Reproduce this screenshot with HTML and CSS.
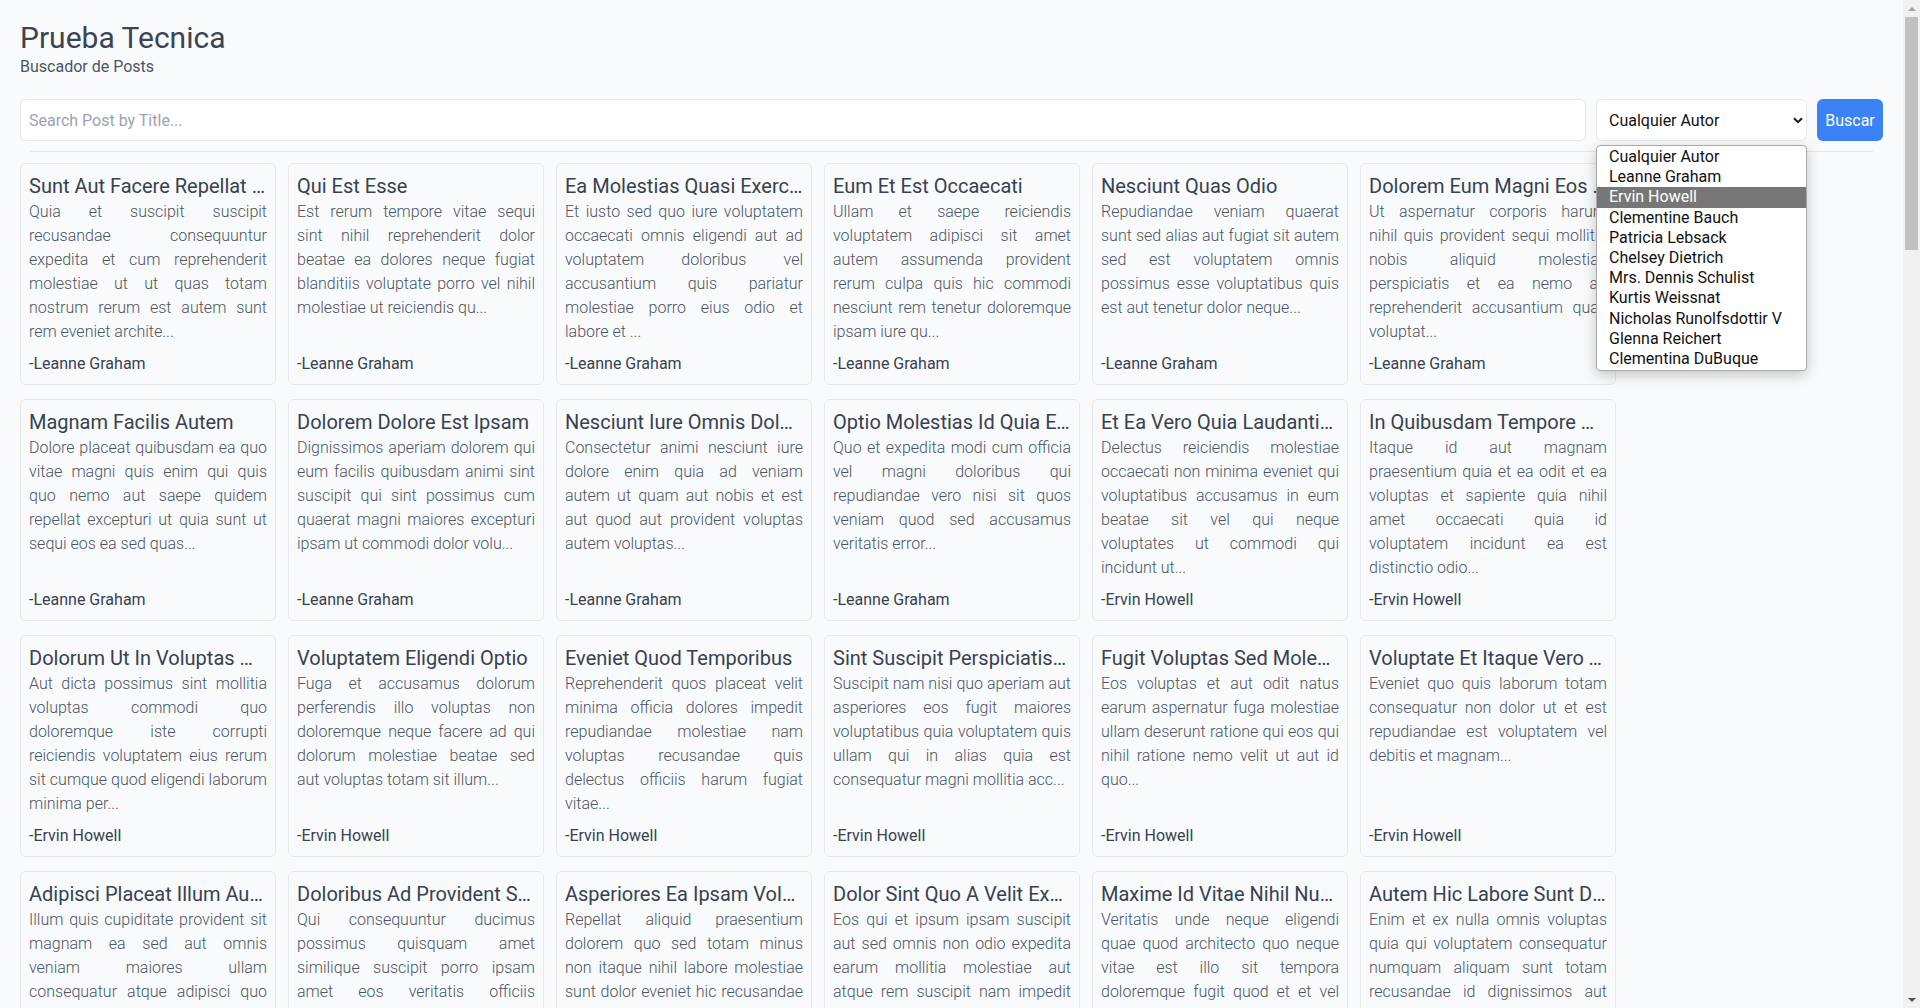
FILE: index.html
```html
<!DOCTYPE html>
<html lang="es">
<head>
<meta charset="utf-8">
<title>Prueba Tecnica</title>
<link rel="stylesheet" href="styles.css">
</head>
<body>
<div class="screen">
  <main class="page">
    <header class="header">
      <h1 class="title">Prueba Tecnica</h1>
      <p class="subtitle">Buscador de Posts</p>
    </header>

    <form class="search">
      <input class="search-input" type="text" placeholder="Search Post by Title...">
      <div class="select">
        <div class="select-box">
          <span>Cualquier Autor</span>
          <svg class="chevron" width="10" height="7" viewBox="0 0 10 7"><path d="M1 1.2 L5 5.2 L9 1.2" fill="none" stroke="#1a1a1a" stroke-width="2"/></svg>
        </div>
        <ul class="select-menu">
          <li>Cualquier Autor</li>
          <li>Leanne Graham</li>
          <li class="active">Ervin Howell</li>
          <li>Clementine Bauch</li>
          <li>Patricia Lebsack</li>
          <li>Chelsey Dietrich</li>
          <li>Mrs. Dennis Schulist</li>
          <li>Kurtis Weissnat</li>
          <li>Nicholas Runolfsdottir V</li>
          <li>Glenna Reichert</li>
          <li>Clementina DuBuque</li>
        </ul>
      </div>
      <button class="btn" type="button">Buscar</button>
    </form>

    <hr class="divider">

    <section class="grid">
      <article class="card"><h2 class="card-title">sunt aut facere repellat provident occaecati excepturi optio reprehenderit</h2><p class="card-body">Quia et suscipit suscipit recusandae consequuntur expedita et cum reprehenderit molestiae ut ut quas totam nostrum rerum est autem sunt rem eveniet archite...</p><p class="card-author">-Leanne Graham</p></article>
      <article class="card"><h2 class="card-title">qui est esse</h2><p class="card-body">Est rerum tempore vitae sequi sint nihil reprehenderit dolor beatae ea dolores neque fugiat blanditiis voluptate porro vel nihil molestiae ut reiciendis qu...</p><p class="card-author">-Leanne Graham</p></article>
      <article class="card"><h2 class="card-title">ea molestias quasi exercitationem repellat qui ipsa sit aut</h2><p class="card-body">Et iusto sed quo iure voluptatem occaecati omnis eligendi aut ad voluptatem doloribus vel accusantium quis pariatur molestiae porro eius odio et labore et ...</p><p class="card-author">-Leanne Graham</p></article>
      <article class="card"><h2 class="card-title">eum et est occaecati</h2><p class="card-body">Ullam et saepe reiciendis voluptatem adipisci sit amet autem assumenda provident rerum culpa quis hic commodi nesciunt rem tenetur doloremque ipsam iure qu...</p><p class="card-author">-Leanne Graham</p></article>
      <article class="card"><h2 class="card-title">nesciunt quas odio</h2><p class="card-body">Repudiandae veniam quaerat sunt sed alias aut fugiat sit autem sed est voluptatem omnis possimus esse voluptatibus quis est aut tenetur dolor neque...</p><p class="card-author">-Leanne Graham</p></article>
      <article class="card"><h2 class="card-title">dolorem eum magni eos aperiam quia</h2><p class="card-body">Ut aspernatur corporis harum nihil quis provident sequi mollitia nobis aliquid molestiae perspiciatis et ea nemo ab reprehenderit accusantium quas voluptat...</p><p class="card-author">-Leanne Graham</p></article>

      <article class="card"><h2 class="card-title">magnam facilis autem</h2><p class="card-body">Dolore placeat quibusdam ea quo vitae magni quis enim qui quis quo nemo aut saepe quidem repellat excepturi ut quia sunt ut sequi eos ea sed quas...</p><p class="card-author">-Leanne Graham</p></article>
      <article class="card"><h2 class="card-title">dolorem dolore est ipsam</h2><p class="card-body">Dignissimos aperiam dolorem qui eum facilis quibusdam animi sint suscipit qui sint possimus cum quaerat magni maiores excepturi ipsam ut commodi dolor volu...</p><p class="card-author">-Leanne Graham</p></article>
      <article class="card"><h2 class="card-title">nesciunt iure omnis dolorem tempora et accusantium</h2><p class="card-body">Consectetur animi nesciunt iure dolore enim quia ad veniam autem ut quam aut nobis et est aut quod aut provident voluptas autem voluptas...</p><p class="card-author">-Leanne Graham</p></article>
      <article class="card"><h2 class="card-title">optio molestias id quia eum</h2><p class="card-body">Quo et expedita modi cum officia vel magni doloribus qui repudiandae vero nisi sit quos veniam quod sed accusamus veritatis error...</p><p class="card-author">-Leanne Graham</p></article>
      <article class="card"><h2 class="card-title">et ea vero quia laudantium autem</h2><p class="card-body">Delectus reiciendis molestiae occaecati non minima eveniet qui voluptatibus accusamus in eum beatae sit vel qui neque voluptates ut commodi qui incidunt ut...</p><p class="card-author">-Ervin Howell</p></article>
      <article class="card"><h2 class="card-title">in quibusdam tempore odit est dolorem</h2><p class="card-body">Itaque id aut magnam praesentium quia et ea odit et ea voluptas et sapiente quia nihil amet occaecati quia id voluptatem incidunt ea est distinctio odio...</p><p class="card-author">-Ervin Howell</p></article>

      <article class="card"><h2 class="card-title">dolorum ut in voluptas mollitia et saepe quo animi</h2><p class="card-body">Aut dicta possimus sint mollitia voluptas commodi quo doloremque iste corrupti reiciendis voluptatem eius rerum sit cumque quod eligendi laborum minima per...</p><p class="card-author">-Ervin Howell</p></article>
      <article class="card"><h2 class="card-title">voluptatem eligendi optio</h2><p class="card-body">Fuga et accusamus dolorum perferendis illo voluptas non doloremque neque facere ad qui dolorum molestiae beatae sed aut voluptas totam sit illum...</p><p class="card-author">-Ervin Howell</p></article>
      <article class="card"><h2 class="card-title">eveniet quod temporibus</h2><p class="card-body">Reprehenderit quos placeat velit minima officia dolores impedit repudiandae molestiae nam voluptas recusandae quis delectus officiis harum fugiat vitae...</p><p class="card-author">-Ervin Howell</p></article>
      <article class="card"><h2 class="card-title">sint suscipit perspiciatis velit dolorum rerum ipsa laboriosam odio</h2><p class="card-body">Suscipit nam nisi quo aperiam aut asperiores eos fugit maiores voluptatibus quia voluptatem quis ullam qui in alias quia est consequatur magni mollitia acc...</p><p class="card-author">-Ervin Howell</p></article>
      <article class="card"><h2 class="card-title">fugit voluptas sed molestias voluptatem provident</h2><p class="card-body">Eos voluptas et aut odit natus earum aspernatur fuga molestiae ullam deserunt ratione qui eos qui nihil ratione nemo velit ut aut id quo...</p><p class="card-author">-Ervin Howell</p></article>
      <article class="card"><h2 class="card-title">voluptate et itaque vero tempora molestiae</h2><p class="card-body">Eveniet quo quis laborum totam consequatur non dolor ut et est repudiandae est voluptatem vel debitis et magnam...</p><p class="card-author">-Ervin Howell</p></article>

      <article class="card"><h2 class="card-title">adipisci placeat illum aut reiciendis qui</h2><p class="card-body">Illum quis cupiditate provident sit magnam ea sed aut omnis veniam maiores ullam consequatur atque adipisci quo iste expedita sit quos voluptas...</p><p class="card-author">-Ervin Howell</p></article>
      <article class="card"><h2 class="card-title">doloribus ad provident suscipit at</h2><p class="card-body">Qui consequuntur ducimus possimus quisquam amet similique suscipit porro ipsam amet eos veritatis officiis exercitationem vel fugit aut necessitatibus tot...</p><p class="card-author">-Ervin Howell</p></article>
      <article class="card"><h2 class="card-title">asperiores ea ipsam voluptatibus modi minima quia sint</h2><p class="card-body">Repellat aliquid praesentium dolorem quo sed totam minus non itaque nihil labore molestiae sunt dolor eveniet hic recusandae veniam tempora et tenetur expe...</p><p class="card-author">-Clementine Bauch</p></article>
      <article class="card"><h2 class="card-title">dolor sint quo a velit explicabo quia nam</h2><p class="card-body">Eos qui et ipsum ipsam suscipit aut sed omnis non odio expedita earum mollitia molestiae aut atque rem suscipit nam impedit esse...</p><p class="card-author">-Clementine Bauch</p></article>
      <article class="card"><h2 class="card-title">maxime id vitae nihil numquam</h2><p class="card-body">Veritatis unde neque eligendi quae quod architecto quo neque vitae est illo sit tempora doloremque fugit quod et et vel beatae sequi ullam sed tenetur pers...</p><p class="card-author">-Clementine Bauch</p></article>
      <article class="card"><h2 class="card-title">autem hic labore sunt dolores incidunt</h2><p class="card-body">Enim et ex nulla omnis voluptas quia qui voluptatem consequatur numquam aliquam sunt totam recusandae id dignissimos aut sed asperiores deserunt...</p><p class="card-author">-Clementine Bauch</p></article>
    </section>
  </main>

  <div class="scrollbar">
    <div class="sb-arrow sb-up"><span class="tri-up"></span></div>
    <div class="sb-track"><div class="sb-thumb"></div></div>
    <div class="sb-arrow sb-down"><span class="tri-down"></span></div>
  </div>
</div>
</body>
</html>
```

FILE: styles.css
```css
* { box-sizing: border-box; }

html, body {
  margin: 0;
  height: 100%;
}

body {
  font-family: Roboto, "Liberation Sans", sans-serif;
  background: #f9fafb;
  color: #374151;
  overflow: hidden;
}

.screen {
  display: flex;
  height: 1008px;
}

.page {
  flex: 1;
  min-width: 0;
  height: 1008px;
  overflow: hidden;
  padding: 20px 20px 0 20px;
}

/* header */
.title {
  margin: 0;
  font-size: 30px;
  line-height: 35px;
  font-weight: 400;
  color: #3b4452;
}

.subtitle {
  margin: 0;
  font-size: 16px;
  line-height: 24px;
  color: #4b5563;
}

/* search row */
.search {
  display: flex;
  gap: 10px;
  margin-top: 20px;
  height: 42px;
}

.search-input {
  flex: 1;
  height: 42px;
  border: 1px solid #e5e7eb;
  border-radius: 6px;
  background: #fff;
  padding: 0 8px;
  font-family: Roboto, "Liberation Sans", sans-serif;
  font-size: 16px;
  color: #374151;
  outline: none;
}

.search-input::placeholder { color: #9ca3af; }

.select {
  position: relative;
  width: 211px;
}

.select-box {
  height: 42px;
  border: 1px solid #e5e7eb;
  border-radius: 6px;
  background: #fff;
  display: flex;
  align-items: center;
  justify-content: space-between;
  padding: 0 3px 0 12px;
  font-size: 16px;
  color: #111;
}

.chevron { display: block; }

.select-menu {
  position: absolute;
  left: 0;
  top: 46px;
  width: 211px;
  margin: 0;
  padding: 1px 0;
  list-style: none;
  background: #fff;
  border: 1px solid #a9a9a9;
  border-radius: 4px;
  box-shadow: 0 4px 14px rgba(0, 0, 0, 0.22);
  z-index: 10;
}

.select-menu li {
  height: 20.2px;
  line-height: 20px;
  padding-left: 12px;
  font-size: 16px;
  color: #111;
  white-space: nowrap;
}

.select-menu li.active {
  background: #777;
  color: #fff;
}

.btn {
  width: 66px;
  height: 42px;
  border: 0;
  border-radius: 6px;
  background: #3b82f6;
  color: #fff;
  font-family: Roboto, "Liberation Sans", sans-serif;
  font-size: 16px;
  padding: 0;
}

.divider {
  border: 0;
  border-top: 1px solid #e5e7eb;
  margin: 10px 10px 11px;
}

/* cards */
.grid {
  display: grid;
  grid-template-columns: repeat(6, 256px);
  column-gap: 12px;
  row-gap: 14px;
}

.card {
  display: flex;
  flex-direction: column;
  border: 1px solid #e5e7eb;
  border-radius: 6px;
  background: #f9fafb;
  padding: 8px;
}

.card-title {
  margin: 0;
  font-size: 20px;
  line-height: 28px;
  font-weight: 400;
  color: #374151;
  white-space: nowrap;
  overflow: hidden;
  text-overflow: ellipsis;
  text-transform: capitalize;
}

.card-body {
  margin: 0 0 8px;
  font-size: 16px;
  line-height: 24px;
  font-weight: 300;
  color: #4b5563;
  text-align: justify;
}

.card-author {
  margin: auto 0 0;
  font-size: 16px;
  line-height: 24px;
  color: #374151;
}

/* fake window scrollbar */
.scrollbar {
  width: 17px;
  flex: none;
  display: flex;
  flex-direction: column;
  background: #f1f1f1;
}

.sb-arrow {
  height: 17px;
  flex: none;
  display: flex;
  align-items: center;
  justify-content: center;
}

.sb-track {
  flex: 1;
  padding: 0 2px;
}

.sb-thumb {
  height: 233px;
  background: #c1c1c1;
}

.tri-up {
  width: 0;
  height: 0;
  border-left: 4px solid transparent;
  border-right: 4px solid transparent;
  border-bottom: 4px solid #a3a3a3;
}

.tri-down {
  width: 0;
  height: 0;
  border-left: 4px solid transparent;
  border-right: 4px solid transparent;
  border-top: 4px solid #505050;
}
```
